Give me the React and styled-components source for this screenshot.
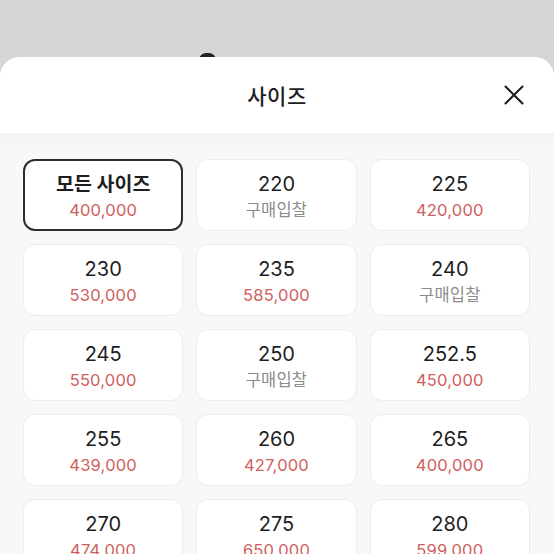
import styled, { createGlobalStyle, css } from "styled-components";

const GlobalStyle = createGlobalStyle`
  html, body {
    margin: 0;
    padding: 0;
    background: #d6d6d6;
    overflow: hidden;
  }
  * { box-sizing: border-box; }
`;

const sizes = [
  { size: "모든 사이즈", price: "400,000", all: true },
  { size: "220" },
  { size: "225", price: "420,000" },
  { size: "230", price: "530,000" },
  { size: "235", price: "585,000" },
  { size: "240" },
  { size: "245", price: "550,000" },
  { size: "250" },
  { size: "252.5", price: "450,000" },
  { size: "255", price: "439,000" },
  { size: "260", price: "427,000" },
  { size: "265", price: "400,000" },
  { size: "270", price: "474,000" },
  { size: "275", price: "650,000" },
  { size: "280", price: "599,000" },
];

const Page = styled.div`
  position: relative;
  width: 554px;
  height: 554px;
  padding-top: 57px;
  font-family: Inter, "Noto Sans CJK KR", "Noto Sans", sans-serif;
  color: #222;
`;

// 시트 뒤로 살짝 보이는 물체
const Peek = styled.div`
  position: absolute;
  left: 199px;
  top: 53px;
  width: 17px;
  height: 9px;
  border-radius: 8px 8px 2px 2px;
  background: #232323;
`;

const Sheet = styled.div`
  position: relative;
  height: 100%;
  background: #fff;
  border-radius: 20px 20px 0 0;
  overflow: hidden;
`;

const Header = styled.header`
  position: relative;
  height: 76px;
  display: flex;
  align-items: center;
  justify-content: center;
  background: #fff;
`;

const Title = styled.h1`
  margin: 0;
  font-family: "Noto Sans CJK KR", sans-serif;
  font-size: 21px;
  font-weight: 500;
  letter-spacing: 0.5px;
  color: #1e1e1e;
`;

const CloseButton = styled.button`
  position: absolute;
  right: 28px;
  top: 50%;
  transform: translateY(-50%);
  width: 24px;
  height: 24px;
  padding: 0;
  border: 0;
  background: none;
  display: flex;
  align-items: center;
  justify-content: center;
`;

const Body = styled.div`
  height: 100%;
  background: linear-gradient(#f4f4f4, #f8f8f8 18px);
  padding: 26px 24px 0 23px;
`;

const Grid = styled.div`
  display: grid;
  grid-template-columns: repeat(3, 1fr);
  column-gap: 13px;
  row-gap: 13px;
`;

const Card = styled.div`
  height: 72px;
  display: flex;
  flex-direction: column;
  align-items: center;
  padding-top: 11px;
  gap: 2px;
  background: #fff;
  border: 1px solid #ececec;
  border-radius: 12px;

  ${(p) =>
    p.$selected &&
    css`
      border: 2px solid #2d2d2d;
      padding-top: 10px;
    `}
`;

const SizeLabel = styled.div`
  font-size: ${(p) => (p.$bold ? "19.5px" : "20px")};
  font-weight: ${(p) => (p.$bold ? 700 : 400)};
  line-height: 26px;
  color: #1e1e1e;
  white-space: nowrap;
`;

const Price = styled.div`
  font-size: 16.5px;
  line-height: 22px;
  letter-spacing: 0.2px;
  color: ${(p) => (p.$bid ? "#8c8c8c" : "#cf5e5e")};
  white-space: nowrap;
`;

const CloseIcon = () => (
  <svg width="20" height="20" viewBox="0 0 20 20" fill="none">
    <path
      d="M1.5 1.5 L18.5 18.5 M18.5 1.5 L1.5 18.5"
      stroke="#1e1e1e"
      strokeWidth="2.1"
      strokeLinecap="round"
    />
  </svg>
);

export default function App() {
  return (
    <Page>
      <GlobalStyle />
      <Peek />
      <Sheet>
        <Header>
          <Title>사이즈</Title>
          <CloseButton aria-label="닫기">
            <CloseIcon />
          </CloseButton>
        </Header>
        <Body>
          <Grid>
            {sizes.map((s, i) => (
              <Card key={i} $selected={s.all}>
                <SizeLabel $bold={s.all}>{s.size}</SizeLabel>
                {s.price ? <Price>{s.price}</Price> : <Price $bid>구매입찰</Price>}
              </Card>
            ))}
          </Grid>
        </Body>
      </Sheet>
    </Page>
  );
}
